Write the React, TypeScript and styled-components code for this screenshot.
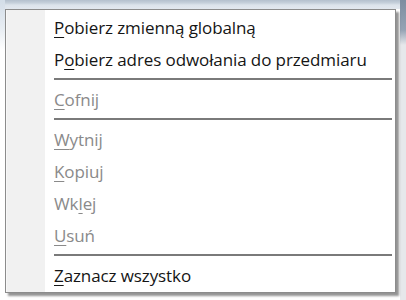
import styled, { createGlobalStyle } from "styled-components";

const GlobalStyle = createGlobalStyle`
    html, body {
        margin: 0;
        padding: 0;
        background: #ffffff;
    }
`;

interface MenuItemModel {
    label: string;
    hotkey: number;
    disabled?: boolean;
    separatorBefore?: boolean;
}

const items: MenuItemModel[] = [
    { label: "Pobierz zmienną globalną", hotkey: 0 },
    { label: "Pobierz adres odwołania do przedmiaru", hotkey: 1 },
    { label: "Cofnij", hotkey: 0, disabled: true, separatorBefore: true },
    { label: "Wytnij", hotkey: 0, disabled: true, separatorBefore: true },
    { label: "Kopiuj", hotkey: 0, disabled: true },
    { label: "Wklej", hotkey: 2, disabled: true },
    { label: "Usuń", hotkey: 0, disabled: true },
    { label: "Zaznacz wszystko", hotkey: 0, separatorBefore: true },
];

const Page = styled.div`
    box-sizing: border-box;
    width: 406px;
    height: 300px;
    padding: 9px 10px 7px 5px;
    background:
        linear-gradient(to bottom, #7d8da0 0px, #95a3b4 30px, #e6e8eb 45px) right top / 6px 100% no-repeat,
        linear-gradient(to bottom, #d3dde8 0px, #e9eef3 30px, #ffffff 50px) left top / 5px 100% no-repeat,
        linear-gradient(to bottom, #b4c0cd 0px, #c6d0db 3px, #dce3eb 5px, #e2e8ef 9px) left top / 100% 9px no-repeat,
        #ffffff;
`;

const Menu = styled.div`
    box-sizing: border-box;
    height: 100%;
    display: flex;
    flex-direction: column;
    padding: 1px 1px 2px 1px;
    border: 1px solid #8c8c8c;
    background: linear-gradient(to right, #ffffff 0px, #f1f1f1 1px, #f1f1f1 39px, #ffffff 39px);
    box-shadow: 3px 3px 2px rgba(60, 60, 60, 0.55);
    font-family: "Open Sans", "Liberation Sans", sans-serif;
    font-size: 17px;
`;

const Item = styled.div<{ $disabled?: boolean }>`
    height: 32px;
    display: flex;
    align-items: center;
    padding-left: 47px;
    color: ${(p) => (p.$disabled ? "#8a8a8a" : "#151515")};
    white-space: nowrap;
    letter-spacing: -0.1px;

    u {
        text-decoration: underline;
        text-decoration-thickness: 1px;
        text-underline-offset: 3px;
    }
`;

const Separator = styled.div`
    height: 8px;
    display: flex;
    align-items: center;
    margin: 0 2px 0 47px;

    &::after {
        content: "";
        flex: 1;
        height: 2px;
        background: #7a7a7a;
    }
`;

function Label({ text, hotkey }: { text: string; hotkey: number }) {
    return (
        <span>
            {text.slice(0, hotkey)}
            <u>{text.charAt(hotkey)}</u>
            {text.slice(hotkey + 1)}
        </span>
    );
}

export default function App() {
    return (
        <Page>
            <GlobalStyle />
            <Menu>
                {items.map((item) => (
                    <div key={item.label}>
                        {item.separatorBefore && <Separator />}
                        <Item $disabled={item.disabled}>
                            <Label text={item.label} hotkey={item.hotkey} />
                        </Item>
                    </div>
                ))}
            </Menu>
        </Page>
    );
}
